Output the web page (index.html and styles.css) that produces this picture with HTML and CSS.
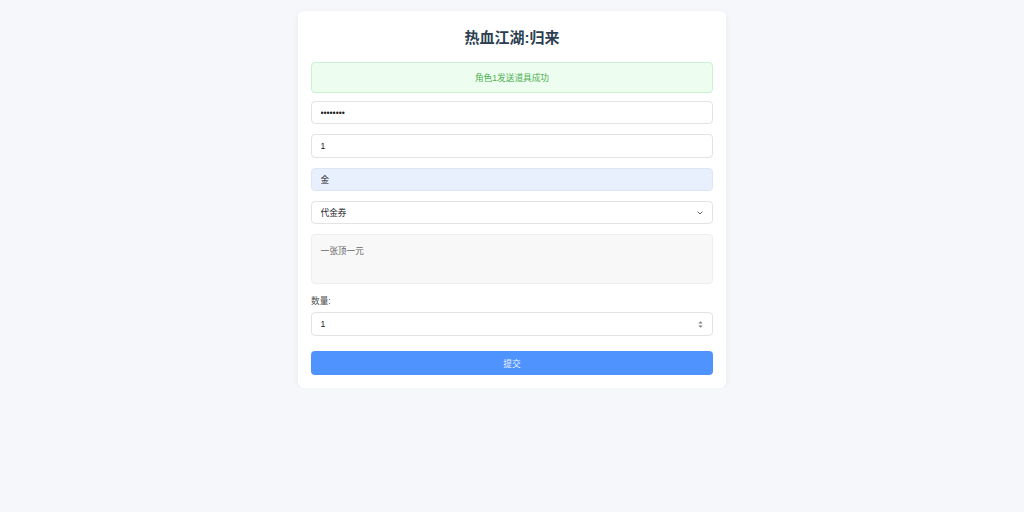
FILE: index.html
```html
<!DOCTYPE html>
<html lang="zh-CN">
<head>
<meta charset="utf-8">
<title>热血江湖:归来</title>
<link rel="stylesheet" href="styles.css">
</head>
<body>
<div class="card">
  <h2 class="title">热血江湖:归来</h2>
  <div class="alert">角色1发送道具成功</div>
  <form class="form">
    <input class="field" type="password" value="12345678">
    <input class="field" type="text" value="1">
    <input class="field autofill" type="text" value="金">
    <div class="select-wrap">
      <select class="field select">
        <option>代金券</option>
      </select>
      <svg class="chevron" width="6" height="4" viewBox="0 0 6 4"><path d="M0.6 0.7 L3 3 L5.4 0.7" fill="none" stroke="#555" stroke-width="0.9"/></svg>
    </div>
    <textarea class="field desc" readonly>一张顶一元</textarea>
    <div class="qty">
      <label class="label">数量:</label>
      <div class="num-wrap">
        <input class="field num" type="text" value="1">
        <svg class="spin" width="5" height="7" viewBox="0 0 5 7"><path d="M2.5 0.3 L4.6 2.6 L0.4 2.6 Z M2.5 6.7 L4.6 4.4 L0.4 4.4 Z" fill="#7a7a7a"/></svg>
      </div>
    </div>
    <button class="submit" type="button">提交</button>
  </form>
</div>
</body>
</html>
```
FILE: styles.css
```css
html, body {
  margin: 0;
  padding: 0;
}
body {
  background: #f5f7fa;
  font-family: "Liberation Sans", "Noto Sans CJK SC", sans-serif;
  font-size: 8.67px;
  color: #333;
  padding-top: 10.67px;
}
.card {
  box-sizing: border-box;
  width: 428px;
  margin: 0 auto;
  background: #fff;
  border-radius: 6px;
  padding: 13px 13px 13.33px;
  box-shadow: 0 1px 6px rgba(0, 0, 0, 0.06);
}
.title {
  margin: 2px 0 12px;
  font-size: 15px;
  line-height: 24px;
  text-align: center;
  color: #2c3e50;
  font-weight: bold;
}
.alert {
  box-sizing: border-box;
  height: 31px;
  border: 1px solid #c9f0d1;
  background: #edfdf0;
  color: #4caf50;
  border-radius: 4px;
  display: flex;
  align-items: center;
  justify-content: center;
  margin-bottom: 8.5px;
}
.form {
  display: flex;
  flex-direction: column;
  gap: 10px;
  margin: 0;
}
.field {
  box-sizing: border-box;
  display: block;
  width: 100%;
  height: 23.33px;
  margin: 0;
  padding: 0 8.5px;
  border: 0.67px solid #e3e3e3;
  border-radius: 4px;
  background: #fff;
  font-family: inherit;
  font-size: 8.67px;
  color: #222;
  outline: none;
}
.autofill {
  background: #e8f0fe;
  border-color: #dde6f5;
}
.select-wrap, .num-wrap {
  position: relative;
}
.select {
  appearance: none;
  -webkit-appearance: none;
  color: #222;
}
.chevron {
  position: absolute;
  right: 10px;
  top: 10px;
}
.desc {
  height: 49.8px;
  padding: 10px 8.5px 6px;
  line-height: 13px;
  background: #f8f8f8;
  border-color: #eeeeee;
  color: #666;
  resize: none;
}
.qty {
  display: flex;
  flex-direction: column;
  gap: 4px;
}
.label {
  color: #555;
  line-height: 14px;
}
.spin {
  position: absolute;
  right: 10px;
  top: 8.3px;
}
.submit {
  box-sizing: border-box;
  width: 100%;
  height: 24px;
  margin-top: 5px;
  border: none;
  border-radius: 4px;
  background: #4f93ff;
  color: #eef4ff;
  font-family: inherit;
  font-size: 8.67px;
}
```
